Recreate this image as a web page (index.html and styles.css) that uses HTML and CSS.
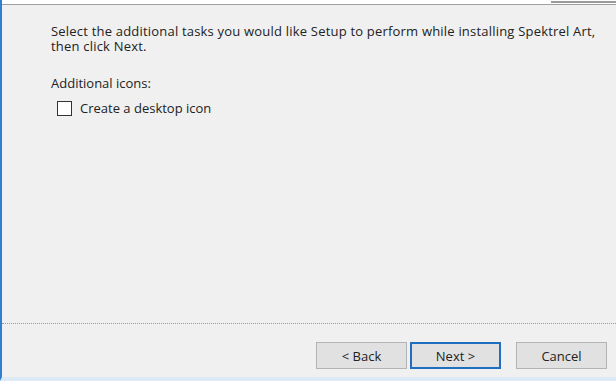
FILE: index.html
```html
<!DOCTYPE html>
<html>
  <head>
    <link rel="stylesheet" href="styles.css">
  </head>
  <body>
  <main class="wizard">
    <div class="header-edge"><span class="header-tab"></span></div>
    <section class="page">
      <p class="intro">Select the additional tasks you would like Setup to perform while installing Spektrel Art,<br>then click Next.</p>
      <p class="group-label">Additional icons:</p>
      <label class="task">
        <span class="box"></span>
        <span>Create a desktop icon</span>
      </label>
    </section>
    <footer class="buttons">
      <button type="button" class="btn">&lt; Back</button>
      <button type="button" class="btn default">Next &gt;</button>
      <button type="button" class="btn cancel">Cancel</button>
    </footer>
  </main>
  </body>
</html>
```

FILE: styles.css
```css
* {
  box-sizing: border-box;
}
body {
  margin: 0;
  width: 616px;
  height: 381px;
  overflow: hidden;
  font-family: "Open Sans", "DejaVu Sans", sans-serif;
  font-size: 13px;
  color: #222;
}
.wizard {
  height: 381px;
  display: flex;
  flex-direction: column;
  background-color: #f0f0f0;
  border-left: 2px solid #2f7fcf;
  border-bottom: 4px solid #dde9f4;
}
.header-edge {
  height: 5px;
  background-color: #fff;
  border-bottom: 1px solid #a0a0a0;
  display: flex;
  justify-content: flex-end;
}
.header-tab {
  width: 65px;
  height: 2px;
  margin-top: 1px;
  background-color: #9a9a9a;
}
.page {
  flex: 1;
  padding: 19px 0 0 49px;
  border-bottom: 1px dotted #9a9a9a;
  margin-bottom: 18px;
}
.intro {
  margin: 0;
  line-height: 15px;
  letter-spacing: 0.2px;
}
.group-label {
  margin: 22px 0 0 0;
  line-height: 15px;
}
.task {
  display: flex;
  align-items: center;
  gap: 8px;
  margin: 10px 0 0 6px;
  line-height: 15px;
}
.box {
  width: 15px;
  height: 15px;
  border: 1px solid #333;
  background-color: #fff;
}
.buttons {
  display: flex;
  justify-content: flex-end;
  padding: 0 9px 8px 0;
}
.btn {
  width: 91px;
  height: 27px;
  margin-left: 3px;
  font-family: inherit;
  font-size: 13px;
  color: #222;
  background-color: #e1e1e1;
  border: 1px solid #b4b4b4;
  border-radius: 0;
}
.btn.default {
  border: 2px solid #1e6fbf;
}
.btn.cancel {
  margin-left: 15px;
}
```
